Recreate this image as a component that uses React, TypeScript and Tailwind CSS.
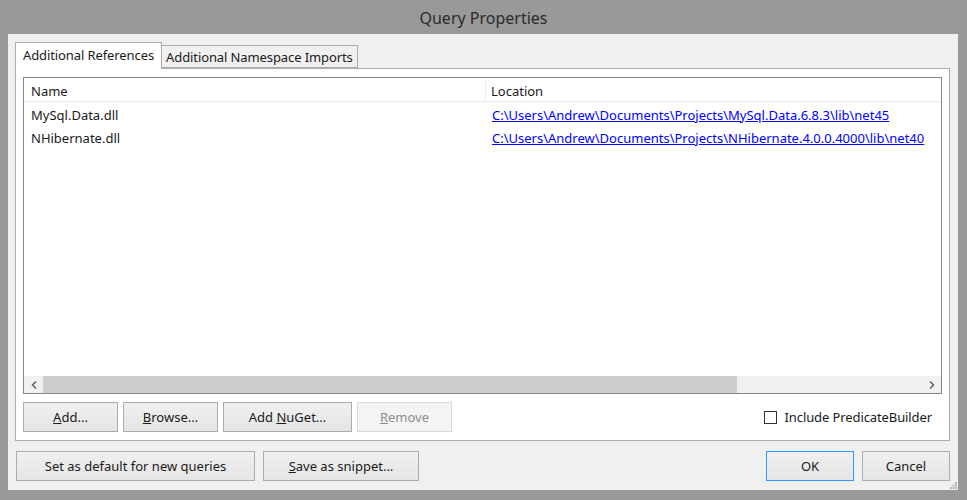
import React from 'react'

const font = { fontFamily: '"Noto Sans", "Open Sans", sans-serif' }

function Btn({
  children,
  className = '',
  disabled = false,
  primary = false
}: {
  children: React.ReactNode
  className?: string
  disabled?: boolean
  primary?: boolean
}) {
  return (
    <div
      className={`h-[30px] pt-[2px] flex items-center justify-center text-[13px] border ${
        disabled
          ? 'bg-[#f4f4f4] border-[#d9d9d9] text-[#8d8d8d]'
          : primary
          ? 'bg-gradient-to-b from-[#f0f0f0] to-[#e5e5e5] border-[#3399ff] text-[#1a1a1a]'
          : 'bg-gradient-to-b from-[#f0f0f0] to-[#e5e5e5] border-[#acacac] text-[#1a1a1a]'
      } ${className}`}
    >
      {children}
    </div>
  )
}

const refs = [
  { name: 'MySql.Data.dll', loc: 'C:\\Users\\Andrew\\Documents\\Projects\\MySql.Data.6.8.3\\lib\\net45' },
  { name: 'NHibernate.dll', loc: 'C:\\Users\\Andrew\\Documents\\Projects\\NHibernate.4.0.0.4000\\lib\\net40' }
]

export default function App() {
  return (
    <div className="w-[967px] h-[500px] bg-[#999999] flex flex-col" style={font}>
      {/* Title bar */}
      <div className="h-[34px] flex items-center justify-center text-[16px] text-[#2b2b2b] pt-[1px]">
        Query Properties
      </div>

      {/* Client area */}
      <div className="ml-[8px] mr-[9px] mb-[10px] flex-1 bg-[#f0f0f0] flex flex-col pt-[8px] pl-[7px] pr-[8px] relative">
        {/* Tabs */}
        <div className="flex items-end h-[26px]">
          <div className="h-[27px] -mb-[1px] px-[7px] pb-[1px] flex items-center bg-white border border-b-0 border-[#adadad] text-[13px] tracking-[-0.1px] text-[#1a1a1a] relative z-10">
            Additional References
          </div>
          <div className="h-[23px] px-[4px] pt-[2px] flex items-center bg-[#f0f0f0] border border-l-0 border-[#adadad] text-[13px] tracking-[-0.1px] text-[#1a1a1a]">
            Additional Namespace Imports
          </div>
        </div>

        {/* Tab panel */}
        <div className="h-[373px] bg-white border border-[#adadad] px-[7px] pt-[8px] flex flex-col">
          {/* List view */}
          <div className="h-[317px] border border-[#828790] flex flex-col">
            <div className="flex-1 flex flex-col">
              <div className="flex h-[24px] border-b border-[#e5eef8] text-[13px] text-[#1a1a1a]">
                <div className="w-[462px] pl-[7px] pt-[4px] flex items-center border-r border-[#e5eef8]">Name</div>
                <div className="flex-1 pl-[5px] pt-[4px] flex items-center">Location</div>
              </div>
              {refs.map(r => (
                <div key={r.name} className="flex h-[23px] pt-[4px] text-[13px]">
                  <div className="w-[462px] pl-[7px] flex items-center text-[#1a1a1a]">{r.name}</div>
                  <div className="flex-1 pl-[6px] flex items-center text-[#0000ff] underline whitespace-nowrap">
                    {r.loc}
                  </div>
                </div>
              ))}
            </div>
            {/* Horizontal scrollbar */}
            <div className="h-[17px] bg-[#f0f0f0] flex items-stretch">
              <div className="w-[19px] flex items-center justify-center">
                <svg width="6" height="8" viewBox="0 0 6 8">
                  <path d="M5 0.5 L1.5 4 L5 7.5" fill="none" stroke="#606060" strokeWidth="1.5" />
                </svg>
              </div>
              <div className="w-[694px] bg-[#cdcdcd]" />
              <div className="flex-1" />
              <div className="w-[19px] flex items-center justify-center">
                <svg width="6" height="8" viewBox="0 0 6 8">
                  <path d="M1 0.5 L4.5 4 L1 7.5" fill="none" stroke="#606060" strokeWidth="1.5" />
                </svg>
              </div>
            </div>
          </div>

          {/* Buttons row */}
          <div className="flex items-center mt-[8px]">
            <Btn className="w-[95px]"><span><u>A</u>dd...</span></Btn>
            <Btn className="w-[95px] ml-[5px]"><span><u>B</u>rowse...</span></Btn>
            <Btn className="w-[129px] ml-[5px]"><span>Add <u>N</u>uGet...</span></Btn>
            <Btn className="w-[95px] ml-[5px]" disabled><span><u>R</u>emove</span></Btn>
            <div className="flex-1" />
            <div className="flex items-center mr-[10px] text-[13px] tracking-[-0.1px] text-[#1a1a1a]">
              <div className="w-[13px] h-[13px] border border-[#333333] bg-white mr-[8px]" />
              <span className="pt-[1px]">Include PredicateBuilder</span>
            </div>
          </div>
        </div>

        {/* Bottom buttons */}
        <div className="flex items-center mt-[10px] ml-[1px]">
          <Btn className="w-[239px]">Set as default for new queries</Btn>
          <Btn className="w-[156px] ml-[8px]"><span><u>S</u>ave as snippet...</span></Btn>
          <div className="flex-1" />
          <Btn className="w-[88px]" primary>OK</Btn>
          <Btn className="w-[88px] ml-[8px]">Cancel</Btn>
        </div>

        {/* Resize grip */}
        <svg className="absolute right-[1px] bottom-[1px]" width="7" height="7" viewBox="0 0 7 7">
          <rect x="5" y="0" width="2" height="2" fill="#b8b8b8" />
          <rect x="2.5" y="2.5" width="2" height="2" fill="#b8b8b8" />
          <rect x="5" y="2.5" width="2" height="2" fill="#b8b8b8" />
          <rect x="0" y="5" width="2" height="2" fill="#b8b8b8" />
          <rect x="2.5" y="5" width="2" height="2" fill="#b8b8b8" />
          <rect x="5" y="5" width="2" height="2" fill="#b8b8b8" />
        </svg>
      </div>
    </div>
  )
}
